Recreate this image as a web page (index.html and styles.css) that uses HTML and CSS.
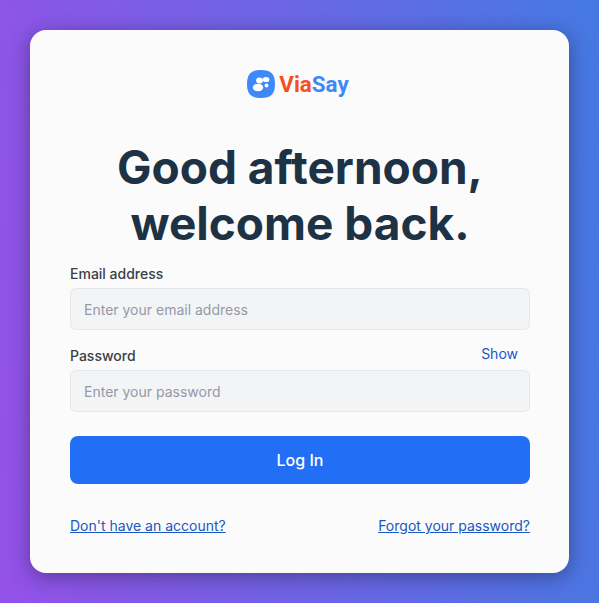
FILE: index.html
```html
<!DOCTYPE html>
<html lang="en">
<head>
<meta charset="utf-8">
<title>ViaSay Login</title>
<link rel="stylesheet" href="styles.css">
</head>
<body>
<main class="card">
  <div class="logo">
    <svg class="logo-icon" viewBox="0 0 28 28" width="28" height="28" aria-hidden="true">
      <path d="M14 0C24 0 28 4 28 14S24 28 14 28 0 24 0 14 4 0 14 0Z" fill="#3f88f8"/>
      <ellipse cx="19" cy="9.5" rx="3.4" ry="2.6" fill="#fff"/>
      <ellipse cx="12.5" cy="10.5" rx="3.4" ry="2.9" fill="#fff"/>
      <ellipse cx="11" cy="17.5" rx="5.2" ry="3.8" fill="#fff"/>
      <circle cx="19.5" cy="15.5" r="1.9" fill="#fff"/>
    </svg>
    <span class="logo-text"><span class="via">Via</span><span class="say">Say</span></span>
  </div>
  <h1 class="title">Good afternoon,<br>welcome back.</h1>
  <form class="form">
    <div class="field">
      <div class="label-row"><label class="label">Email address</label></div>
      <input class="input" type="text" placeholder="Enter your email address">
    </div>
    <div class="field">
      <div class="label-row"><label class="label">Password</label><a class="show">Show</a></div>
      <input class="input" type="password" placeholder="Enter your password">
    </div>
    <button class="submit" type="button">Log In</button>
  </form>
  <div class="links">
    <a class="link" href="#">Don't have an account?</a>
    <a class="link" href="#">Forgot your password?</a>
  </div>
</main>
</body>
</html>
```
FILE: styles.css
```css
* { box-sizing: border-box; }
html, body { height: 100%; }
body {
  margin: 0;
  padding: 30px 0 0 30px;
  background: linear-gradient(85deg, #9451e8 0%, #4579e2 100%);
  font-family: Inter, "Liberation Sans", sans-serif;
}
.card {
  width: 539px;
  height: 543px;
  background: #fbfbfb;
  border-radius: 16px;
  padding: 40px 39px 40px 40px;
  box-shadow: 0 4px 20px rgba(0,0,0,.35);
}
.logo { display: flex; justify-content: center; align-items: center; gap: 4px; height: 28px; padding-right: 4px; }
.logo-text { font-family: Roboto, sans-serif; font-weight: 700; font-size: 22.4px; }
.via { color: #f4511e; }
.say { color: #3f88f8; }
.title {
  margin: 41px 0 0;
  text-align: center;
  font-family: Inter, sans-serif;
  font-weight: 700;
  font-size: 46px;
  line-height: 56px;
  color: #1d3245;
}
.form { margin-top: 11px; }
.field { margin-bottom: 14px; }
.label-row { display: flex; justify-content: space-between; align-items: center; height: 22px; margin-bottom: 4px; padding-right: 12px; }
.label { font-size: 14px; font-weight: 500; color: #3b3f46; }
.show { font-size: 14px; color: #1a56c4; margin-bottom: 4px; }
.input {
  display: block;
  width: 100%;
  height: 42px;
  padding: 0 13px;
  background: #f3f4f6;
  border: 1px solid #e5e7eb;
  border-radius: 6px;
  font: 14px Inter, sans-serif;
}
.input::placeholder { color: #949aa6; opacity: 1; }
.submit {
  display: block;
  width: 100%;
  height: 48px;
  margin-top: 24px;
  border: 0;
  border-radius: 8px;
  background: #226ff5;
  color: #fff;
  font: 500 16px Inter, sans-serif;
}
.links { display: flex; justify-content: space-between; margin-top: 33px; }
.link { font-size: 14px; color: #1a56c4; }
```
